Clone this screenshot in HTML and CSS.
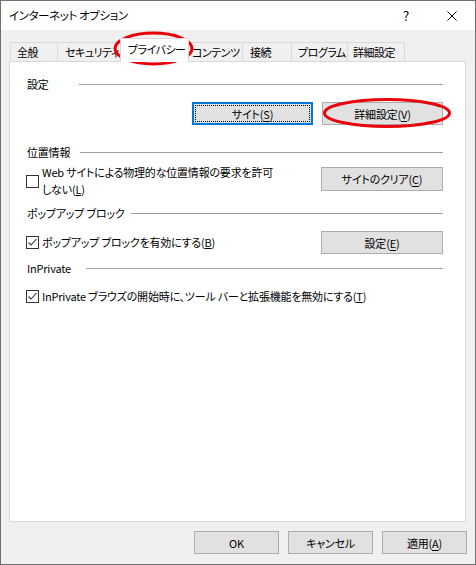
FILE: index.html
```html
<!DOCTYPE html>
<html lang="ja">
<head>
<meta charset="utf-8">
<title>インターネット オプション</title>
<link rel="stylesheet" href="styles.css">
</head>
<body>
<div class="window">
  <div class="titlebar">
    <span class="title">インターネット オプション</span>
    <span class="cap-btn help">?</span>
    <span class="cap-btn close">
      <svg width="10" height="10" viewBox="0 0 10 10"><path d="M0.5 0.5 L9.5 9.5 M9.5 0.5 L0.5 9.5" stroke="#000" stroke-width="1" fill="none"/></svg>
    </span>
  </div>
  <div class="body">
    <div class="tabs">
      <div class="tab tab-general">全般</div>
      <div class="tab tab-security">セキュリティ</div>
      <div class="tab tab-privacy selected">プライバシー</div>
      <div class="tab tab-content">コンテンツ</div>
      <div class="tab tab-conn">接続</div>
      <div class="tab tab-prog">プログラム</div>
      <div class="tab tab-adv">詳細設定</div>
    </div>
    <div class="panel">
      <div class="sec sec-settings"><span class="sec-label">設定</span><i class="rule"></i></div>
      <div class="row row-btns">
        <button class="btn btn-wide focus">サイト(<u>S</u>)</button>
        <button class="btn btn-wide">詳細設定(<u>V</u>)</button>
      </div>

      <div class="sec sec-location"><span class="sec-label">位置情報</span><i class="rule"></i></div>
      <div class="row row-loc">
        <label class="check">
          <span class="cb"></span>
          <span class="check-text">Web サイトによる物理的な位置情報の要求を許可<br>しない(<u>L</u>)</span>
        </label>
        <button class="btn btn-clear">サイトのクリア(<u>C</u>)</button>
      </div>

      <div class="sec sec-popup"><span class="sec-label">ポップアップ ブロック</span><i class="rule"></i></div>
      <div class="row row-popup">
        <label class="check">
          <span class="cb"><svg width="11" height="11" viewBox="0 0 11 11"><polyline points="1.5,5.5 4,8 9.5,2" fill="none" stroke="#333" stroke-width="1.1"/></svg></span>
          <span class="check-text">ポップアップ ブロックを有効にする(<u>B</u>)</span>
        </label>
        <button class="btn btn-clear">設定(<u>E</u>)</button>
      </div>

      <div class="sec sec-inprivate"><span class="sec-label">InPrivate</span><i class="rule"></i></div>
      <div class="row row-inp">
        <label class="check">
          <span class="cb"><svg width="11" height="11" viewBox="0 0 11 11"><polyline points="1.5,5.5 4,8 9.5,2" fill="none" stroke="#333" stroke-width="1.1"/></svg></span>
          <span class="check-text">InPrivate ブラウズの開始時に、ツール バーと拡張機能を無効にする(<u>T</u>)</span>
        </label>
      </div>
    </div>
    <div class="footer">
      <button class="btn btn-foot">OK</button>
      <button class="btn btn-foot">キャンセル</button>
      <button class="btn btn-foot">適用(<u>A</u>)</button>
    </div>
  </div>
  <svg class="marks" width="476" height="565" viewBox="0 0 476 565">
    <ellipse cx="153.5" cy="48.5" rx="38.5" ry="15.5" fill="none" stroke="#e8000b" stroke-width="3"/>
    <ellipse cx="387" cy="113" rx="62.5" ry="13.5" fill="none" stroke="#e8000b" stroke-width="3"/>
  </svg>
</div>
</body>
</html>
```

FILE: styles.css
```css
* { box-sizing: border-box; }
html, body { margin: 0; padding: 0; }
body {
  font-family: "Noto Sans CJK JP", sans-serif;
  font-feature-settings: "palt";
  font-size: 11px;
  letter-spacing: -0.2px;
  color: #000;
  background: #fff;
}
.window {
  position: relative;
  width: 476px;
  height: 565px;
  border: 1px solid #6f6f6f;
  background: #f0f0f0;
  display: flex;
  flex-direction: column;
}
.titlebar {
  height: 29px;
  flex: none;
  background: #fff;
  display: flex;
  align-items: center;
}
.title {
  flex: 1;
  padding-left: 8px;
  line-height: 29px;
  white-space: nowrap;
  font-size: 11.5px;
  letter-spacing: -0.4px;
}
.cap-btn {
  width: 46px;
  height: 29px;
  display: flex;
  align-items: center;
  justify-content: center;
}
.help { font-size: 13px; padding-bottom: 1px; }
.close svg { display: block; margin-top: 1px; }

.body {
  flex: 1;
  padding: 8px 9px 0 8px;
  display: flex;
  flex-direction: column;
}
.tabs {
  height: 23px;
  display: flex;
  align-items: flex-end;
  padding-left: 1px;
}
.tab {
  height: 19px;
  border: 1px solid #d9d9d9;
  border-bottom: none;
  margin-right: -1px;
  padding: 0 0 0 6px;
  line-height: 18px;
  white-space: nowrap;
  overflow: visible;
  background: #f0f0f0;
  flex: none;
  letter-spacing: -0.5px;
}
.tab-general { width: 48px; }
.tab-security { width: 66px; padding-left: 7px; }
.tab-privacy { width: 69px; }
.tab-content { width: 57px; padding-left: 5px; }
.tab-conn { width: 50px; padding-left: 7px; }
.tab-prog { width: 57px; }
.tab-adv { width: 58px; padding-left: 5px; }
.tab.selected {
  position: relative;
  z-index: 2;
  height: 24px;
  margin-left: -2px;
  margin-right: -3px;
  margin-bottom: -1px;
  background: #fff;
  line-height: 21px;
  padding-left: 7px;
}

.panel {
  height: 461px;
  flex: none;
  background: #fff;
  border: 1px solid #d9d9d9;
  padding: 14px 22px 0 16px;
}
.sec {
  display: flex;
  align-items: center;
  height: 16px;
}
.sec-label {
  flex: none;
  white-space: nowrap;
  line-height: 16px;
  padding-left: 1px;
}
.rule {
  flex: 1;
  height: 1px;
  background: #a0a0a0;
}
.sec-settings .sec-label { width: 53px; }
.sec-location { margin-top: 19px; }
.sec-location .sec-label { width: 54px; }
.sec-popup { margin-top: 7px; }
.sec-popup .sec-label { width: 105px; }
.sec-inprivate { margin-top: 6px; }
.sec-inprivate .sec-label { width: 60px; }

.row { display: flex; }
.row-btns { margin-top: 10px; justify-content: flex-end; gap: 9px; }
.row-loc { margin-top: 4px; justify-content: space-between; align-items: flex-start; }
.row-loc .btn { margin-top: 3px; }
.row-popup { margin-top: 10px; justify-content: space-between; align-items: center; }
.row-inp { margin-top: 12px; }

.check {
  display: flex;
  align-items: center;
}
.cb {
  width: 13px;
  height: 13px;
  flex: none;
  border: 1px solid #333;
  background: #fff;
  margin-right: 3px;
  display: flex;
  align-items: center;
  justify-content: center;
}
.cb svg { display: block; }
.check-text {
  line-height: 17px;
  white-space: nowrap;
}

.btn {
  font: inherit;
  font-feature-settings: "palt";
  letter-spacing: -0.2px;
  color: #000;
  background: #e1e1e1;
  border: 1px solid #adadad;
  padding: 0;
  height: 23px;
  line-height: 20px;
  text-align: center;
  white-space: nowrap;
}
.btn u { text-underline-offset: 2px; }
.btn-wide { width: 121px; }
.btn-clear { width: 122px; height: 24px; }
.row-popup .btn-clear { height: 23px; }
.btn.focus {
  position: relative;
  border: 1px solid #0078d7;
  box-shadow: inset 0 0 0 1px #0078d7;
}
.btn.focus::after {
  content: "";
  position: absolute;
  top: 2px; left: 2px; right: 2px; bottom: 2px;
  border: 1px dotted #000;
}

.footer {
  margin-top: 9px;
  margin-right: -1px;
  display: flex;
  justify-content: flex-end;
  gap: 9px;
}
.btn-foot { width: 85px; }

.marks {
  position: absolute;
  top: -1px;
  left: -1px;
  pointer-events: none;
}
```
